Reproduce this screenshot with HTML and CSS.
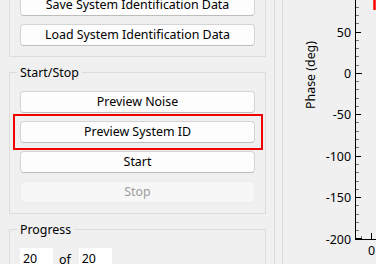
FILE: index.html
```html
<!DOCTYPE html>
<html>
<head>
<meta charset="utf-8">
<link rel="stylesheet" href="styles.css">
</head>
<body>
<div class="left">
  <fieldset class="group first">
    <div class="stack">
      <button class="btn">Save System Identification Data</button>
      <button class="btn">Load System Identification Data</button>
    </div>
  </fieldset>
  <fieldset class="group">
    <legend>Start/Stop</legend>
    <div class="stack">
      <button class="btn">Preview Noise</button>
      <div class="hl"><button class="btn">Preview System ID</button></div>
      <button class="btn">Start</button>
      <button class="btn" disabled>Stop</button>
    </div>
  </fieldset>
  <fieldset class="group">
    <legend>Progress</legend>
    <div class="progress">
      <span class="spin">20</span>
      <span class="of">of</span>
      <span class="spin">20</span>
    </div>
  </fieldset>
</div>
<div class="right">
  <svg class="plot" width="93" height="264" viewBox="0 0 93 264">
    <text class="ylabel" transform="translate(27 75) rotate(-90)" text-anchor="middle" dominant-baseline="central">Phase (deg)</text>
    <line x1="91.5" y1="0" x2="91.5" y2="10" stroke="#ff0000" stroke-width="2.5"/>
    <g stroke="#777" stroke-width="1">
      <line x1="72.5" y1="7.5" x2="76" y2="7.5"/>
      <line x1="72.5" y1="15.5" x2="76" y2="15.5"/>
      <line x1="72.5" y1="23.5" x2="76" y2="23.5"/>
      <line x1="72.5" y1="40.5" x2="76" y2="40.5"/>
      <line x1="72.5" y1="48.5" x2="76" y2="48.5"/>
      <line x1="72.5" y1="56.5" x2="76" y2="56.5"/>
      <line x1="72.5" y1="65.5" x2="76" y2="65.5"/>
      <line x1="72.5" y1="81.5" x2="76" y2="81.5"/>
      <line x1="72.5" y1="89.5" x2="76" y2="89.5"/>
      <line x1="72.5" y1="98.5" x2="76" y2="98.5"/>
      <line x1="72.5" y1="106.5" x2="76" y2="106.5"/>
      <line x1="72.5" y1="122.5" x2="76" y2="122.5"/>
      <line x1="72.5" y1="131.5" x2="76" y2="131.5"/>
      <line x1="72.5" y1="139.5" x2="76" y2="139.5"/>
      <line x1="72.5" y1="147.5" x2="76" y2="147.5"/>
      <line x1="72.5" y1="164.5" x2="76" y2="164.5"/>
      <line x1="72.5" y1="172.5" x2="76" y2="172.5"/>
      <line x1="72.5" y1="181.5" x2="76" y2="181.5"/>
      <line x1="72.5" y1="189.5" x2="76" y2="189.5"/>
      <line x1="72.5" y1="205.5" x2="76" y2="205.5"/>
      <line x1="72.5" y1="214.5" x2="76" y2="214.5"/>
      <line x1="72.5" y1="222.5" x2="76" y2="222.5"/>
      <line x1="72.5" y1="230.5" x2="76" y2="230.5"/>
      <line x1="78.5" y1="239" x2="78.5" y2="236"/>
    </g>
    <g stroke="#000" stroke-width="1">
      <line x1="72.5" y1="0" x2="72.5" y2="240"/>
      <line x1="72" y1="239.5" x2="93" y2="239.5"/>
      <line x1="72.5" y1="32.5" x2="78" y2="32.5"/>
      <line x1="72.5" y1="73.5" x2="79" y2="73.5"/>
      <line x1="72.5" y1="114.5" x2="78" y2="114.5"/>
      <line x1="72.5" y1="156.5" x2="78" y2="156.5"/>
      <line x1="72.5" y1="197.5" x2="78" y2="197.5"/>
      <line x1="72" y1="238.5" x2="79" y2="238.5"/>
      <line x1="88.5" y1="239" x2="88.5" y2="233"/>
    </g>
    <g class="ticks" text-anchor="end" dominant-baseline="central">
      <text x="68" y="32.5">50</text>
      <text x="68" y="73">0</text>
      <text x="68" y="114.5">-50</text>
      <text x="68" y="156">-100</text>
      <text x="68" y="197">-150</text>
      <text x="68" y="239">-200</text>
    </g>
    <text class="ticks" x="88.5" y="250" text-anchor="middle" dominant-baseline="central">0</text>
  </svg>
</div>
</body>
</html>
```

FILE: styles.css
```css
html, body {
  margin: 0;
  padding: 0;
}
body {
  width: 376px;
  height: 264px;
  overflow: hidden;
  background: #f0f0f0;
  font-family: "Noto Sans", "Open Sans", sans-serif;
  font-size: 12.4px;
  color: #000;
  display: flex;
}
.left {
  width: 275px;
  flex: none;
  box-sizing: border-box;
  border-right: 1px solid #dcdcdc;
  padding-left: 9px;
}
.group {
  width: 257px;
  box-sizing: border-box;
  border: 1px solid #dcdcdc;
  margin: 0 0 7px 0;
  padding: 10px 10px 10px 10px;
  min-width: 0;
}
.group.first {
  margin-top: -17px;
}
legend {
  padding: 0 3px;
  margin-left: -3px;
  line-height: 17px;
}
.stack {
  display: flex;
  flex-direction: column;
  gap: 8px;
}
.btn {
  display: block;
  width: 100%;
  height: 22px;
  box-sizing: border-box;
  margin: 0;
  padding: 0;
  background: #fdfdfd;
  border: 1px solid #d4d4d4;
  border-bottom-color: #bdbdbd;
  border-radius: 4px;
  font: inherit;
  color: #000;
  text-align: center;
  line-height: 20px;
  white-space: nowrap;
  overflow: hidden;
}
.btn:disabled {
  background: #f7f7f7;
  border-color: #ebebeb;
  color: #9d9d9d;
}
.hl {
  position: relative;
}
.hl::after {
  content: "";
  position: absolute;
  top: -7px;
  bottom: -7px;
  left: -7px;
  right: -8px;
  border: 2px solid #f00000;
  pointer-events: none;
}
.progress {
  display: flex;
  align-items: center;
}
.spin {
  display: block;
  width: 33px;
  height: 22px;
  box-sizing: border-box;
  padding-left: 3px;
  background: #fff;
  line-height: 22px;
}
.of {
  margin: 0 8px 0 6px;
}
.right {
  flex: 1;
  margin-left: 7px;
  border-left: 1px solid #dcdcdc;
  overflow: hidden;
}
.plot {
  display: block;
}
.plot text {
  font-family: "Noto Sans", "Open Sans", sans-serif;
  font-size: 12.4px;
  fill: #000;
}
```
